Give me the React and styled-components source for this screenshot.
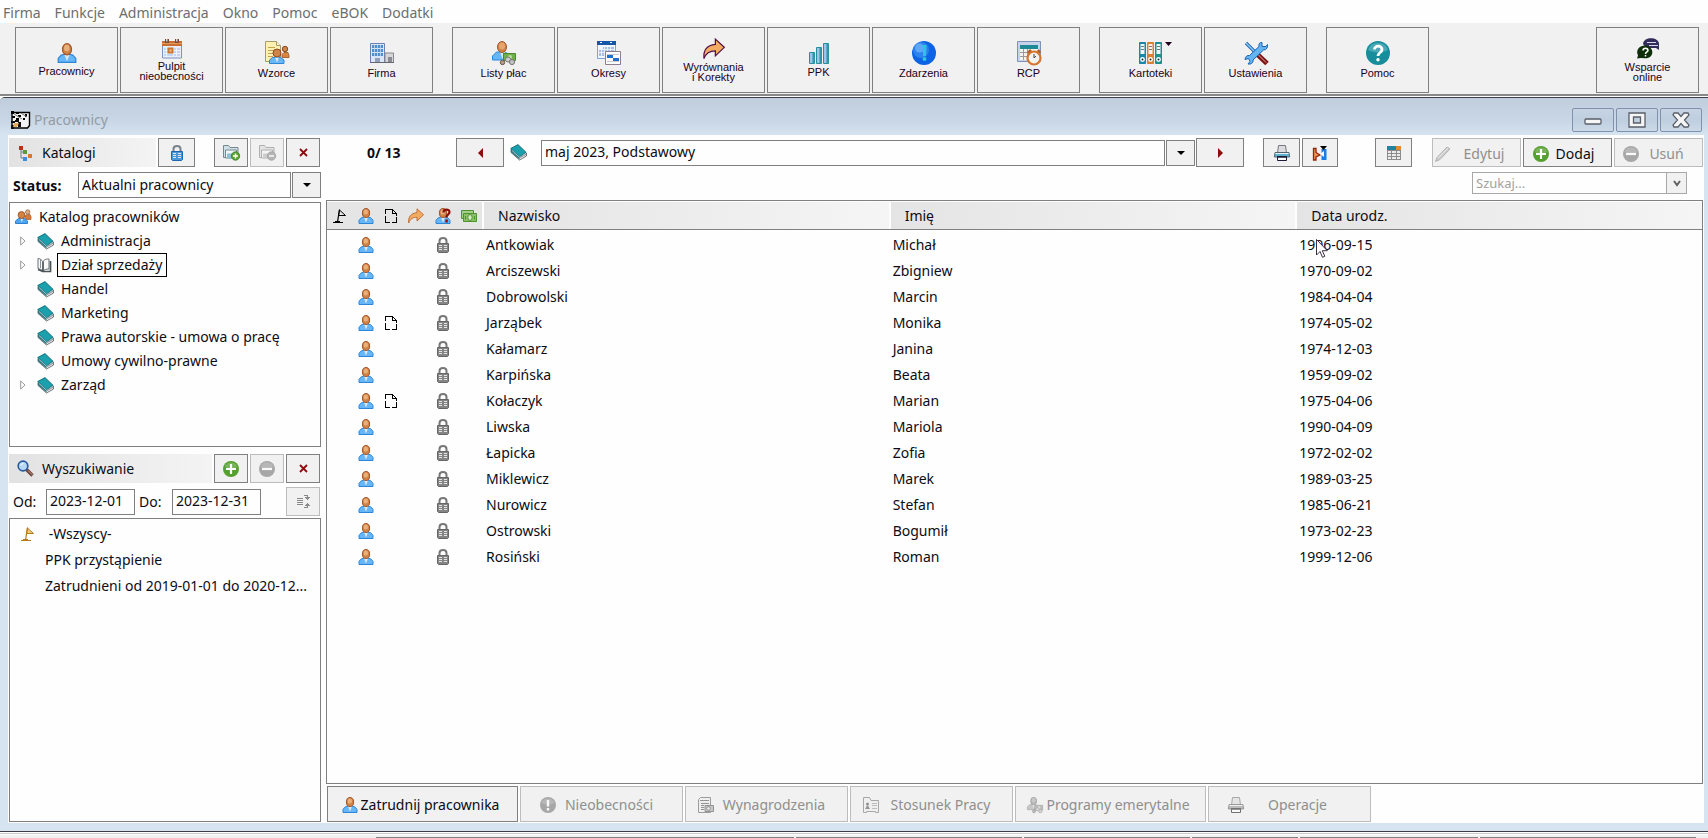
import React from "react";
import styled, { createGlobalStyle, css } from "styled-components";

const colors = {
  text: "#0c0c14",
  line: "#808080",
  lineOff: "#bcbcbc",
  face: "#f1f1f1",
  frame: "#d6e4f1",
  white: "#fefefe",
  muted: "#8f8f8f",
};

const GlobalStyle = createGlobalStyle`
  * {
    box-sizing: border-box;
  }
  body {
    margin: 0;
    background: ${colors.white};
    color: ${colors.text};
    font-family: "Noto Sans", "Open Sans", sans-serif;
    font-size: 14px;
    line-height: 20px;
  }
  button, input, select {
    margin: 0;
    font: inherit;
    color: inherit;
    border-radius: 0;
  }
  svg {
    display: block;
    flex-shrink: 0;
    overflow: visible;
  }
`;

/* ---------- icons ---------- */

const Svg = ({ size = 16, box = 16, crisp, children }) => (
  <svg
    width={size}
    height={size}
    viewBox={`0 0 ${box} ${box}`}
    fill="none"
    shapeRendering={crisp ? "crispEdges" : "auto"}
    aria-hidden="true"
  >
    {children}
  </svg>
);

const personShape = (
  <>
    <path d="M1 15.500v-3.200l2.400-2.600L6 9h4l2.600.7L15 12.300v3.200z" fill="#66b6f8" stroke="#2f86d6" />
    <path d="M6 9.500h4L8 14.500z" fill="#d9e8f4" />
    <ellipse cx="8" cy="5" rx="3.600" ry="4.500" fill="#cf8448" stroke="#a4562a" />
    <ellipse cx="7.800" cy="4" rx="2.200" ry="2.600" fill="#e9b07c" />
  </>
);

const Person = ({ size }) => <Svg size={size}>{personShape}</Svg>;

const People = ({ size }) => (
  <Svg size={size}>
    <path d="M10 9.500V7l2-1.500h3l1 2v3h-5z" fill="#d27b3c" stroke="#a8581f" strokeWidth=".7" />
    <circle cx="12.700" cy="3" r="2.200" fill="#e3ad80" stroke="#8f6a4d" strokeWidth=".8" />
    <path d="M.5 14.500v-2.500l3-2.500h6l3 2.500v2.500z" fill="#4ea5f2" stroke="#2f7fd0" />
    <path d="M5.500 9.500h2.600l-1.300 4z" fill="#dceafa" />
    <circle cx="6.500" cy="6" r="3.400" fill="#d3823f" stroke="#a4562a" strokeWidth=".9" />
  </Svg>
);

const PersonQuestion = () => (
  <Svg>
    {personShape}
    <path d="M8.500 4.500c0-4 6-3.700 6-.5 0 2.500-3 2.500-3 5.500" stroke="#8b0f0a" strokeWidth="2.200" />
    <path d="M10.300 11.500h2.500v3h-2.500z" fill="#8b0f0a" />
  </Svg>
);

const Calendar = () => (
  <Svg size={20} box={20}>
    <path d="M.5 3h19v16H.5z" fill="#e8eefa" stroke="#7f93bf" />
    <path d="M0 2h20v5H0z" fill="#c96f35" />
    <path d="M0 4h20v1H0z" fill="#e09a62" />
    <path d="M3 0h4v4H3zM13 0h4v4h-4z" fill="#7b4a35" />
    <path d="M4 0h1.500v2.500H4zM14 0h1.500v2.500H14z" fill="#d8d0d4" />
    <path d="M2 9h16v8H2z" fill="#c5d4f0" />
    <path d="M4.500 9v8M11.500 9v8M14.500 9v8M2 11.500h16M2 14.500h16" stroke="#eef3fc" />
    <path d="M5.500 8.500h6v6h-6z" fill="#cd7430" />
    <circle cx="8.500" cy="11.500" r="1.500" fill="#e7a86e" />
  </Svg>
);

const Templates = () => (
  <Svg size={24} box={24}>
    <path d="M.5.5h11l4 4v16H.5z" fill="#fdf0b0" stroke="#a99a6a" />
    <path d="M11.500.5v4h4" fill="#fff8d8" stroke="#a99a6a" />
    <path d="M3 6.500h7M3 9.500h9M3 12.500h7M3 15.500h5" stroke="#c3a250" />
    <circle cx="20" cy="8" r="2.700" fill="#cf8448" stroke="#8f4a20" />
    <path d="M17 16.500v-3l2-2h4l1 3v2z" fill="#dc8440" stroke="#9c5020" strokeWidth=".8" />
    <path d="M4.500 22.500V19l3-2.500h8L19 19v3.500z" fill="#66b6f8" stroke="#2f86d6" />
    <path d="M10 16.500h4l-2 5z" fill="#d9e8f4" />
    <circle cx="12" cy="12" r="4" fill="#cf8448" stroke="#8f4a20" />
  </Svg>
);

const Building = () => (
  <Svg size={24} box={24}>
    <path d="M.5 2.500h14v19H.5z" fill="#dbe7f7" stroke="#6d82b0" />
    <path d="M2 5.500h11M2 9.500h11M2 13.500h11" stroke="#4f8fce" strokeWidth="3" />
    <path d="M4.500 4v12M7.500 4v12M10.500 4v12" stroke="#c4daf2" strokeWidth=".8" />
    <path d="M5 17h5v4H5z" fill="#8fa0b8" />
    <path d="M15 12h8.500v9.500H15z" fill="#d6d5d8" stroke="#86868e" />
    <path d="M18 16h4v5h-4z" fill="#8a8a92" />
    <path d="M0 21.500h24" stroke="#66666e" />
  </Svg>
);

const Payroll = ({ size = 24 }) => (
  <Svg size={size} box={24}>
    <path d="M.5 19v-4l4-4h9l4 4v4z" fill="#66b6f8" stroke="#2f86d6" />
    <path d="M8 11h5l-2.500 7z" fill="#d9e8f4" />
    <ellipse cx="10" cy="6" rx="4.500" ry="5.500" fill="#cf8448" stroke="#a4562a" />
    <ellipse cx="10" cy="5" rx="3" ry="3.500" fill="#e5a56c" />
    <path d="M11.500 12.500h12v7h-12z" fill="#6fb04a" stroke="#4a8a2c" />
    <circle cx="18" cy="16" r="2" fill="#b9dfa0" />
    <circle cx="16" cy="18.500" r="2.500" fill="#d0d0d0" stroke="#777" />
    <circle cx="20" cy="21" r="2.600" fill="#c0c0c0" stroke="#777" />
    <circle cx="10.500" cy="21.500" r="2.200" fill="#b49a84" stroke="#6e5a4c" />
  </Svg>
);

const Periods = () => (
  <Svg size={24} box={24}>
    <path d="M.5.500h18v17H.5z" fill="#f2f7fd" stroke="#7fa3d2" />
    <path d="M0 0h19v4H0z" fill="#1457a8" />
    <path d="M3 1.500h2M13 1.500h2" stroke="#fff" />
    <path d="M2 8h4v7H2zM6 6h11v9H6z" fill="#a9bfe0" />
    <path d="M4.500 6v9M7.500 6v9M10.500 6v9M13.500 6v9M2 8.500h15M2 11.500h15" stroke="#f2f7fd" strokeWidth=".8" />
    <path d="M8.500 10.500h15v13h-15z" fill="#fff" stroke="#8d7d8f" />
    <path d="M10 13.500h12M10 20.500h12" stroke="#c9c9d2" />
    <path d="M10 14h6v3h-6zM16 17h6v3h-6z" fill="#1e6fd0" />
  </Svg>
);

const Forward = ({ size = 16, edge = "#b8682c" }) => (
  <Svg size={size}>
    <path d="M.7 15c-.6-6 2-9.800 8.300-10.300V.8L15.500 6.800 9 13V9.300C5 9.300 2.200 10.500.7 15z" fill="#f3ab62" stroke={edge} strokeWidth=".9" />
  </Svg>
);

const Bars = () => (
  <Svg size={22} box={22}>
    <path d="M1.500 10.500h5v11h-5zM8.500 5.500h5v16h-5zM15.500 1.500h5v20h-5z" fill="#9cc4ea" stroke="#2a8d9c" />
    <path d="M5.500 11v10M12.500 6v15M19.500 2v19" stroke="#3295ac" strokeWidth="2" />
  </Svg>
);

const Info = () => (
  <Svg size={24} box={24}>
    <circle cx="12" cy="12" r="12" fill="#0c63e6" />
    <circle cx="9" cy="9" r="8" fill="#4ea4f5" opacity=".5" />
    <circle cx="7.500" cy="7" r="4.500" fill="#7cc2fb" opacity=".6" />
    <path d="M10.500 4h4l-.6 11h-2.800z" fill="#2fc3e0" />
    <circle cx="12.500" cy="18" r="2" fill="#2fc3e0" />
  </Svg>
);

const TimeClock = () => (
  <Svg size={24} box={24}>
    <path d="M.5.5h23v20H.5z" fill="#c5d4ea" stroke="#7e92b8" />
    <path d="M3 4h18v4H3z" fill="#1b8b98" />
    <path d="M3 8h18v11H3z" fill="#f4f3ef" />
    <path d="M6.500 8v11M10.500 8v11M3 11.500h18M3 15.500h18" stroke="#9a9a98" />
    <path d="M11 12l3-3M23 12l-2-3" stroke="#b15a1c" strokeWidth="2.500" />
    <circle cx="17" cy="17" r="6.500" fill="#f2f2f0" stroke="#d6752e" strokeWidth="2.200" />
    <path d="M17 13v4l2-2" stroke="#444" />
  </Svg>
);

const Binders = () => (
  <Svg size={24} box={24}>
    {["#1a87a8", "#d9822b", "#1d9088"].map((c, i) => (
      <g key={c} transform={`translate(${i * 8} 0)`}>
        <path d="M.5 1.500h6v21h-6z" fill={c} stroke={c} />
        <path d="M1.500 3h4v10h-4z" fill="#f4f4f4" />
        <path d="M2 5.500h3M2 8.500h3" stroke="#777" />
        <circle cx="3.500" cy="18.500" r="2.400" fill="#fff" />
        <circle cx="3.500" cy="18.500" r="1" fill="#222" />
      </g>
    ))}
    <path d="M26 1h7l-3.500 4z" fill="#1c001c" />
  </Svg>
);

const Tools = () => (
  <Svg size={24} box={24}>
    <path d="M2 2l10 10" stroke="#1b64b4" strokeWidth="3.200" />
    <path d="M2 2l10 10" stroke="#8ccbf7" strokeWidth="1.400" />
    <path d="M14 14l9 8.500" stroke="#7c1414" strokeWidth="5" />
    <path d="M14 13.500l8 8" stroke="#e7a9a0" strokeWidth="1" />
    <path d="M18 1.500v4h4l1.500-2c.5 3-1 5.500-4 5.500L9 19c.5 3-2 4.500-5 4l2-2.500-1.500-3L1 18.500c0-3 2.500-4.500 4.500-4L15 5.500C14.500 3 15.500 1 18 1.500z" fill="#63b4ef" stroke="#1b64b4" />
  </Svg>
);

const Help = () => (
  <Svg size={24} box={24}>
    <circle cx="12" cy="12" r="12" fill="#178d9c" />
    <path d="M2 9a10.500 10.500 0 0 1 20 0q-10 5-20 0z" fill="#6bbbc8" opacity=".6" />
    <path d="M8.500 8.500c0-4.500 7.500-4.500 7.500 0 0 3-4 3-4 6.500" stroke="#fff" strokeWidth="2.800" />
    <circle cx="12" cy="18.700" r="1.700" fill="#fff" />
  </Svg>
);

const Support = () => (
  <Svg size={22} box={22}>
    <path d="M6 6c1-8 16-7 16 0v6l-3-2H9z" fill="#322c5a" />
    <path d="M10 4.500h9M12 7.500h9" stroke="#d9d9ee" />
    <path d="M0 20.500l1-3C-2 11 4 7 8.500 7.500c9 1 9.500 13-.5 12.800L4 20z" fill="#0f2e0a" />
    <path d="M6 12.500c0-3 5-3 5 0 0 1.500-2.500 1.500-2.500 3.500M8.500 17v1.500" stroke="#fff" strokeWidth="1.500" />
  </Svg>
);

const Chart = () => (
  <Svg size={20} box={20}>
    <path d="M1 2.500h17.500v13l-2 2.500H1z" fill="#f4f4f4" stroke="#000" strokeWidth="1.400" />
    <path d="M0 1h3v3H0zM5 2h3v2H5zM1 6h3v2H1zM7 5h3v2H7zM5 8h3v2H5zM12 8h2v2h-2zM14 4h2v3h-2z" fill="#000" />
    <path d="M3 4l8 5M10 3l6 4" stroke="#777" />
    <path d="M0 11h4v2H0zM0 15h3v4H0zM7 12h3v5H7zM4 10h4v2H4z" fill="#111" />
    <path d="M3 13h5l-2 4H2z" fill="#e3ad5c" />
  </Svg>
);

const TreeIcon = () => (
  <Svg>
    <path d="M4 5v8h4M4 7h5" stroke="#6e7c88" />
    <path d="M2 1h4v4H2z" fill="#b5321f" />
    <path d="M6 5h4v4H6z" fill="#5b9a3c" />
    <path d="M11 9h4v4h-4z" fill="#d67a31" />
    <path d="M6 12h4v4H6z" fill="#3f8fd8" />
  </Svg>
);

const Lock = ({ body = "#4a97dc", edge = "#1f66b2", shackle = "#7a828a" }) => (
  <Svg>
    <path d="M4.500 7V4c0-4 7-4 7 0v3" stroke={shackle} strokeWidth="2" />
    <path d="M2.500 6.500h11v8l-1 1h-9l-1-1z" fill={body} stroke={edge} />
    <path d="M4 8.500h3M9 8.500h3M4 10.500h3M9 10.500h3M4 12.500h3M9 12.500h3" stroke="#e6e6e6" />
  </Svg>
);

const Folder = ({ sign }) => (
  <Svg size={17} box={17}>
    <path d="M.5 13.500v-12h5l1.500 2h8v10z" fill="#cfe0e6" stroke="#75888f" />
    <path d="M2.500 6h11v8h-11z" fill="#f1f6f8" stroke="#75888f" />
    <path d="M4 9.500h8v5H4z" fill="#8ebfd4" />
    <circle cx="12.500" cy="12" r="4.200" fill="#58a436" stroke="#3d7d22" strokeWidth=".8" />
    <path d={sign === "plus" ? "M10 12h5M12.500 9.500v5" : "M10 12h5"} stroke="#fff" strokeWidth="1.500" />
  </Svg>
);

const Cross = () => (
  <Svg size={9} box={9}>
    <path d="M1 1l7 7M8 1L1 8" stroke="#8c0c10" strokeWidth="1.800" />
  </Svg>
);

const Book = () => (
  <Svg size={17} box={17}>
    <path d="M1 5.500v3L9.500 16l7-4V9z" fill="#f3f3f3" stroke="#5c666e" strokeWidth=".9" />
    <path d="M10 13.500l6-3.300" stroke="#8d979e" strokeWidth="1.200" />
    <path d="M.7 4.500L8 .6 16 8.300 9.700 12.600z" fill="#1aa0ad" stroke="#126c78" strokeWidth=".9" />
    <path d="M1 5v3.300l8.700 7.200v-2.700z" fill="#2b7680" />
    <path d="M2 6.500l7.500 6.800" stroke="#c5d4d8" strokeWidth=".8" />
  </Svg>
);

const OpenBook = () => (
  <Svg>
    <path d="M1 1.500C3 1.500 5 3 6 5c1-3 4-3 6-3v10c-3 0-5 .5-6 2.500C5 12.500 3 12 1 11.500z" fill="#fafafa" stroke="#686e72" />
    <path d="M1 12.500l5 2M6 5v9M13.500 4v10.500H5" stroke="#4c5458" strokeWidth="1.700" />
    <path d="M3.500 3v8" stroke="#8e9498" />
  </Svg>
);

const Expander = () => (
  <svg width="6" height="10" viewBox="0 0 6 10" fill="none" aria-hidden="true">
    <path d="M.7 1L5 5 .7 9z" stroke="#9a9a9a" />
  </svg>
);

const Magnifier = () => (
  <Svg size={17} box={17}>
    <path d="M9.500 9.500l6 6" stroke="#6d4238" strokeWidth="3.400" />
    <path d="M11 10.500l4.500 4.500" stroke="#cf9a86" />
    <circle cx="6" cy="6" r="4.800" fill="#b6d9f5" stroke="#2a5aa0" strokeWidth="1.700" />
    <path d="M3.500 5.500q1-2 3-2" stroke="#fff" />
  </Svg>
);

const RoundSign = ({ sign, color = "#55a02e" }) => (
  <Svg>
    <circle cx="8" cy="8" r="8" fill={color} />
    <path d="M1.500 6a7 7 0 0 1 13 0q-6 3-13 0z" fill="#fff" opacity=".2" />
    {sign === "info" ? (
      <path d="M8 3v6.500M8 11v2.500" stroke="#fff" strokeWidth="2.400" />
    ) : (
      <path d={sign === "plus" ? "M3 8h10M8 3v10" : "M3 8h10"} stroke="#fff" strokeWidth="2.200" />
    )}
  </Svg>
);

const Sort = () => (
  <Svg size={13} box={13} crisp>
    <path d="M0 3.500h6M0 5.500h6M0 7.500h6M0 9.500h6M7 .5h3v3M7 12.500h3v-3" stroke="#444" />
    <path d="M8 2h5L10 5zM8 11h5L10 8z" fill="#444" />
  </Svg>
);

const Flag = ({ line = "#000", fill = "none" }) => (
  <Svg size={14} box={14}>
    <path d="M6.500 1l6 5.500h-7z" stroke={line} fill={fill} />
    <path d="M6.500.5l-2 12.500" stroke={line} strokeWidth="1.200" />
    <path d="M0 13.500h10M2 12.500h5" stroke={line} />
  </Svg>
);

const Page = () => (
  <Svg size={14} box={14} crisp>
    <path d="M1.500 5V.5h7M1.500 7v6.500h4M8 13.500h4.500V8M12.500 7V4.500h-4v-4" stroke="#000" />
    <path d="M9 1l3.500 3.500" stroke="#000" />
  </Svg>
);

const Money = () => (
  <Svg>
    <path d="M.5 2.500h12v8H.5z" fill="#a5cf88" stroke="#4f9130" />
    <path d="M2.500 5.500h13v8h-13z" fill="#8cc069" stroke="#4f9130" />
    <ellipse cx="9" cy="9.500" rx="2.200" ry="3" fill="#d4ecc4" stroke="#4f9130" />
    <path d="M4.500 8v3.500M13.500 8v3.500" stroke="#4f9130" />
  </Svg>
);

const Triangle = ({ d, color = "#000" }) => (
  <svg width="8" height="10" viewBox="0 0 8 10" aria-hidden="true">
    <path d={d} fill={color} />
  </svg>
);

const Printer = ({ tone = "#5fb3cf" }) => (
  <Svg>
    <path d="M3.500 8L4.500.5h7L12.500 8z" fill="#dcdce0" stroke="#77777f" />
    <path d="M1 7.500h14l.7 4.500H.3z" fill={tone} stroke="#44505c" strokeWidth=".8" />
    <path d="M1.500 8.500h13" stroke="#e8f0f4" />
    <path d="M3.500 11.500h9v4h-9z" fill="#fff" stroke="#1c1c38" />
    <path d="M3 12h10" stroke="#1c1c38" strokeWidth="1.500" />
  </Svg>
);

const Transfer = () => (
  <Svg>
    <path d="M1.500 3.500h2.500v4l4 2.500-4 2v3H1.500z" fill="#e99652" stroke="#94230c" strokeWidth="1.300" />
    <path d="M9.500 4h5v11h-5z" fill="#1e7be0" />
    <path d="M8 9l4-3v6z" fill="#fff" />
    <path d="M8 1h7l-3.500 4z" fill="#000" />
  </Svg>
);

const Grid = () => (
  <Svg size={14} box={14} crisp>
    <path d="M0 0h9v4H0z" fill="#1c86a0" />
    <path d="M9 0h5v4H9z" fill="#e08a34" />
    <path d="M0 4h14v10H0z" fill="#8c8c8c" />
    <path d="M1 5h3v2H1zM5 5h4v2H5zM10 5h3v2h-3zM1 8h3v2H1zM5 8h4v2H5zM10 8h3v2h-3zM1 11h3v2H1zM5 11h4v2H5zM10 11h3v2h-3z" fill="#ececec" />
  </Svg>
);

const Pencil = () => (
  <Svg>
    <path d="M.5 15.500l1.500-4L12 1l3 2L5 13.500z" fill="#b4b4b4" stroke="#888" />
    <path d="M3 12l10-10" stroke="#e4e4e4" />
  </Svg>
);

const Sheet = () => (
  <Svg>
    <path d="M.5 2.500l2-2h10v15H.5z" fill="#eee" stroke="#666" />
    <path d="M2 3.500h9M3 6.500h8M3 8.500h3M3 10.500h3M3 12.500h3" stroke="#555" />
    <path d="M7 8.500h8.500v6H7z" fill="#aaa" stroke="#555" />
    <circle cx="10.500" cy="11.500" r="1.800" fill="#eee" stroke="#555" />
  </Svg>
);

const CardFile = () => (
  <Svg>
    <path d="M.5 15.500V.5h6l1.500 3h7.500v12h-3v-1h-9v1z" fill="#eee" stroke="#777" />
    <circle cx="4.500" cy="7" r="1.500" fill="#555" />
    <path d="M2 12l2.500-4L7 12z" fill="#555" />
    <path d="M9 6.500h5M9 8.500h5M9 11.500h5" stroke="#999" />
  </Svg>
);

const Cursor = styled.svg`
  position: absolute;
  left: 21px;
  top: 7px;
`;

/* ---------- menu and main toolbar ---------- */

const Screen = styled.div`
  min-height: 100vh;
  display: flex;
  flex-direction: column;
`;

const MenuBar = styled.nav`
  display: flex;
  gap: 14px;
  height: 23px;
  padding-left: 3px;
  line-height: 25px;
  & a {
    color: #6c6e6e;
    text-decoration: none;
  }
`;

const MainToolbar = styled.header`
  display: flex;
  gap: 19px;
  padding: 4px 9px 1px 15px;
  background: ${colors.face};
  border-bottom: 2px solid #868986;
`;

const ToolGroup = styled.div`
  display: flex;
  gap: 2px;
  &:last-child {
    margin-left: auto;
  }
`;

const ToolButton = styled.button`
  width: 103px;
  height: 66px;
  padding: 0;
  display: flex;
  flex-direction: column;
  align-items: center;
  justify-content: center;
  gap: 2px;
  background: ${colors.face};
  border: 1px solid ${colors.line};
  color: #1c0020;
  font-family: "Liberation Sans", Arial, sans-serif;
  font-size: 11px;
  line-height: ${({ $lines }) => ($lines ? "10px" : "12px")};
  white-space: pre-line;
`;

/* ---------- window ---------- */

const Window = styled.main`
  flex: 1;
  margin-top: 1px;
  display: flex;
  flex-direction: column;
  background: ${colors.frame};
  border-top: 1px solid #3c4046;
  border-bottom: 1px solid #403c44;
  border-top-left-radius: 5px;
`;

const TitleBar = styled.div`
  height: 37px;
  padding: 9px 6px 0 11px;
  display: flex;
  align-items: flex-start;
  justify-content: space-between;
  background: linear-gradient(#bfcddc, #c8d6e5 60%, ${colors.frame});
  border-top-left-radius: 4px;
`;

const Title = styled.h1`
  margin: 0;
  padding-top: 3px;
  display: flex;
  align-items: center;
  gap: 3px;
  color: #949ca5;
  font-size: 14px;
  font-weight: 400;
  line-height: 20px;
`;

const WindowButtons = styled.div`
  display: flex;
  gap: 2px;
  padding-top: 1px;
`;

const WindowButton = styled.button`
  width: 42px;
  height: 24px;
  padding: 0;
  display: grid;
  place-items: center;
  border: 1px solid #8091ad;
  border-radius: 2px;
  background: linear-gradient(#c5d3e3, #c0cfe0 50%, #cbd9e8);
`;

const Content = styled.div`
  flex: 1;
  margin: 0 4px 8px 8px;
  padding: 3px 1px 1px;
  display: flex;
  gap: 5px;
  background: ${colors.white};
`;

const Side = styled.aside`
  width: 312px;
  flex-shrink: 0;
  display: flex;
  flex-direction: column;
`;

const PanelHead = styled.div`
  display: flex;
  gap: 2px;
  padding-right: 1px;
`;

const PanelTitle = styled.h2`
  flex: 1;
  margin: 0;
  padding-left: 7px;
  display: flex;
  align-items: center;
  gap: 8px;
  background: linear-gradient(90deg, #e2e2e2, #f4f4f4);
  font-size: 14px;
  font-weight: 400;
  & span {
    width: 18px;
    display: grid;
    place-items: center;
  }
`;

const Button = styled.button`
  width: ${({ $width }) => $width || 34}px;
  height: ${({ $height }) => $height || 29}px;
  flex-shrink: 0;
  margin-left: ${({ $push }) => $push || 0}px;
  padding: ${({ $gap }) => ($gap ? 2 : 0)}px ${({ $trim }) => $trim || 0}px 0 0;
  display: flex;
  align-items: center;
  justify-content: center;
  gap: ${({ $gap }) => $gap || 0}px;
  background: ${colors.face};
  border: 1px solid ${colors.line};
  white-space: nowrap;
  ${({ disabled }) =>
    disabled &&
    css`
      color: ${colors.muted};
      border-color: ${colors.lineOff};
      & svg {
        filter: grayscale(1);
        opacity: 0.6;
      }
    `}
`;

const StatusRow = styled.div`
  display: grid;
  grid-template-columns: 69px 1fr;
  height: 26px;
  margin: 5px 0 4px;
  align-items: center;
  & label {
    padding: 2px 0 0 4px;
    font-weight: 700;
  }
`;

const Combo = styled.div`
  flex: 1;
  min-width: 0;
  display: grid;
  grid-template-columns: 1fr 29px;
  gap: 1px;
  height: 26px;
`;

const Select = styled.select`
  min-width: 0;
  height: 26px;
  padding: 0 3px 1px;
  appearance: none;
  background: ${colors.white};
  border: 1px solid ${colors.line};
`;

const ComboArrow = styled.span`
  display: grid;
  place-items: center;
  background: ${colors.face};
  border: 1px solid ${colors.line};
  pointer-events: none;
`;

const Tree = styled.ul`
  flex: 0 0 245px;
  margin: 0 0 7px;
  padding: 2px 0 0 5px;
  list-style: none;
  border: 1px solid ${colors.line};
`;

const TreeRow = styled.li`
  display: flex;
  align-items: center;
  height: 24px;
  padding-left: ${({ $child }) => ($child ? 5 : 0)}px;
  gap: ${({ $child }) => ($child ? 0 : 8)}px;
`;

const TreeToggle = styled.span`
  width: 17px;
`;

const TreeIconBox = styled.span`
  width: 20px;
`;

const TreeLabel = styled.span`
  padding: 0 4px 0 3px;
  line-height: 22px;
  border: 1px solid ${({ $selected }) => ($selected ? "#000" : "transparent")};
`;

const DateRow = styled.div`
  display: grid;
  grid-template-columns: 37px 89px 37px 89px 1fr;
  align-items: center;
  margin: 4px 0 2px;
  padding-right: 1px;
  & label {
    padding-left: 4px;
  }
  & button {
    justify-self: end;
  }
`;

const DateInput = styled.input`
  width: 100%;
  height: 26px;
  padding: 0 0 2px 3px;
  background: ${colors.white};
  border: 1px solid ${colors.line};
`;

const FilterList = styled.ul`
  flex: 1;
  margin: 0;
  padding: 2px 6px 0 11px;
  list-style: none;
  border: 1px solid ${colors.line};
`;

const FilterItem = styled.li`
  display: grid;
  grid-template-columns: 24px 1fr;
  align-items: center;
  height: 26px;
  & span {
    white-space: pre;
    overflow: hidden;
    text-overflow: ellipsis;
  }
`;

/* ---------- employee list ---------- */

const Main = styled.section`
  flex: 1;
  min-width: 0;
  display: flex;
  flex-direction: column;
`;

const ListToolbar = styled.div`
  display: flex;
  align-items: center;
  height: 29px;
`;

const Counter = styled.strong`
  width: 130px;
  padding-left: 41px;
  white-space: nowrap;
`;

const PeriodIcon = styled.span`
  width: 37px;
  padding-left: 6px;
  flex-shrink: 0;
`;

const Actions = styled.div`
  display: flex;
  gap: 2px;
  margin-left: 20px;
`;

const Search = styled.div`
  display: flex;
  width: 215px;
  height: 22px;
  margin: 5px 16px 6px auto;
  border: 1px solid #a8a8a8;
  & input {
    flex: 1;
    min-width: 0;
    padding: 0 3px;
    border: 0;
    background: ${colors.white};
    font-size: 13px;
  }
  & input::placeholder {
    color: #a0a2a0;
    opacity: 1;
  }
  & button {
    width: 20px;
    padding: 0;
    display: grid;
    place-items: center;
    border: 0;
    border-left: 1px solid #a8a8a8;
    background: ${colors.face};
  }
`;

const TableFrame = styled.div`
  flex: 1;
  border: 1px solid ${colors.line};
`;

const Table = styled.table`
  width: 100%;
  table-layout: fixed;
  border-collapse: separate;
  border-spacing: 0;
  & tbody::before {
    content: "";
    display: block;
    height: 2px;
  }
`;

const HeadIcon = styled.th`
  height: 29px;
  padding: 0;
  background: #e5e5e5;
  border-top: 1px solid ${colors.white};
  border-bottom: 1px solid ${colors.line};
  & svg {
    margin: 0 auto;
  }
`;

const HeadText = styled.th`
  height: 29px;
  padding: 0 0 0 16px;
  background: linear-gradient(90deg, #e4e4e4, #f5f5f5);
  background-clip: padding-box;
  border-top: 1px solid ${colors.white};
  border-bottom: 1px solid ${colors.line};
  box-shadow: inset 2px 0 ${colors.white};
  font-weight: 400;
  text-align: left;
`;

const IconCell = styled.td`
  height: 26px;
  padding: 0;
  & svg {
    margin: 0 auto;
  }
`;

const TextCell = styled.td`
  position: relative;
  padding: 0 0 0 4px;
`;

const BottomBar = styled.div`
  display: flex;
  gap: 2px;
  margin: 2px 0 0 1px;
`;

const StatusStrip = styled.footer`
  display: grid;
  grid-template-columns: 418fr 226fr 166fr 106fr 178fr 216fr;
  gap: 2px;
  height: 6px;
  padding: 3px 12px 0 376px;
  background: linear-gradient(${colors.white} 1px, #c9c9cd 1px 2px, ${colors.white} 2px 3px, ${colors.face} 3px);
  & span {
    margin-top: 2px;
    border-top: 1px solid ${colors.line};
  }
`;

/* ---------- data ---------- */

const menu = ["Firma", "Funkcje", "Administracja", "Okno", "Pomoc", "eBOK", "Dodatki"];

const toolGroups = [
  [
    { label: "Pracownicy", icon: <Person size={20} /> },
    { label: "Pulpit\nnieobecności", icon: <Calendar /> },
    { label: "Wzorce", icon: <Templates /> },
    { label: "Firma", icon: <Building /> },
  ],
  [
    { label: "Listy płac", icon: <Payroll /> },
    { label: "Okresy", icon: <Periods /> },
    { label: "Wyrównania\ni Korekty", icon: <Forward size={22} edge="#52104a" /> },
    { label: "PPK", icon: <Bars /> },
    { label: "Zdarzenia", icon: <Info /> },
    { label: "RCP", icon: <TimeClock /> },
  ],
  [
    { label: "Kartoteki", icon: <Binders /> },
    { label: "Ustawienia", icon: <Tools /> },
  ],
  [{ label: "Pomoc", icon: <Help /> }],
  [{ label: "Wsparcie\nonline", icon: <Support /> }],
];

const catalogs = [
  { name: "Administracja", expandable: true },
  { name: "Dział sprzedaży", expandable: true, selected: true },
  { name: "Handel" },
  { name: "Marketing" },
  { name: "Prawa autorskie - umowa o pracę" },
  { name: "Umowy cywilno-prawne" },
  { name: "Zarząd", expandable: true },
];

const employees = [
  ["Antkowiak", "Michał", "1996-09-15"],
  ["Arciszewski", "Zbigniew", "1970-09-02"],
  ["Dobrowolski", "Marcin", "1984-04-04"],
  ["Jarząbek", "Monika", "1974-05-02", true],
  ["Kałamarz", "Janina", "1974-12-03"],
  ["Karpińska", "Beata", "1959-09-02"],
  ["Kołaczyk", "Marian", "1975-04-06", true],
  ["Liwska", "Mariola", "1990-04-09"],
  ["Łapicka", "Zofia", "1972-02-02"],
  ["Miklewicz", "Marek", "1989-03-25"],
  ["Nurowicz", "Stefan", "1985-06-21"],
  ["Ostrowski", "Bogumił", "1973-02-23"],
  ["Rosiński", "Roman", "1999-12-06"],
];

const operations = [
  { label: "Zatrudnij pracownika", icon: <Person />, width: 191, gap: 3, trim: 4, on: true },
  { label: "Nieobecności", icon: <RoundSign sign="info" color="#777" />, width: 163, gap: 9, trim: 10 },
  { label: "Wynagrodzenia", icon: <Sheet />, width: 163, gap: 9, trim: 10 },
  { label: "Stosunek Pracy", icon: <CardFile />, width: 163, gap: 12, trim: 10 },
  { label: "Programy emerytalne", icon: <Payroll size={16} />, width: 191, gap: 3, trim: 4 },
  { label: "Operacje", icon: <Printer tone="#999" />, width: 163, gap: 24, trim: 24 },
];

const headIcons = [<Flag />, <Person />, <Page />, <Forward />, <PersonQuestion />, <Money />];
const iconWidths = [26, 26, 24, 26, 27, 26];

const ArrowDown = () => <Triangle d="M0 3h8L4 7z" />;

function Sidebar() {
  return (
    <Side>
      <PanelHead>
        <PanelTitle>
          <span><TreeIcon /></span>
          Katalogi
        </PanelTitle>
        <Button $width={37} aria-label="Blokada"><Lock /></Button>
        <Button $push={17} aria-label="Dodaj katalog"><Folder sign="plus" /></Button>
        <Button disabled aria-label="Usuń katalog"><Folder sign="minus" /></Button>
        <Button aria-label="Zamknij katalogi"><Cross /></Button>
      </PanelHead>
      <StatusRow>
        <label htmlFor="status">Status:</label>
        <Combo>
          <Select id="status">
            <option>Aktualni pracownicy</option>
          </Select>
          <ComboArrow><ArrowDown /></ComboArrow>
        </Combo>
      </StatusRow>
      <Tree>
        <TreeRow>
          <People />
          Katalog pracowników
        </TreeRow>
        {catalogs.map(({ name, expandable, selected }) => (
          <TreeRow key={name} $child>
            <TreeToggle>{expandable && <Expander />}</TreeToggle>
            <TreeIconBox>{selected ? <OpenBook /> : <Book />}</TreeIconBox>
            <TreeLabel $selected={selected}>{name}</TreeLabel>
          </TreeRow>
        ))}
      </Tree>
      <PanelHead>
        <PanelTitle>
          <span><Magnifier /></span>
          Wyszukiwanie
        </PanelTitle>
        <Button aria-label="Dodaj filtr"><RoundSign sign="plus" /></Button>
        <Button disabled aria-label="Usuń filtr"><RoundSign sign="minus" color="#777" /></Button>
        <Button aria-label="Zamknij wyszukiwanie"><Cross /></Button>
      </PanelHead>
      <DateRow>
        <label htmlFor="from">Od:</label>
        <DateInput id="from" defaultValue="2023-12-01" />
        <label htmlFor="to">Do:</label>
        <DateInput id="to" defaultValue="2023-12-31" />
        <Button disabled aria-label="Zastosuj okres"><Sort /></Button>
      </DateRow>
      <FilterList>
        <FilterItem>
          <Flag line="#b8791f" fill="#f6c878" />
          <span> -Wszyscy-</span>
        </FilterItem>
        <FilterItem>
          <i />
          <span>PPK przystąpienie</span>
        </FilterItem>
        <FilterItem>
          <i />
          <span>Zatrudnieni od 2019-01-01 do 2020-12...</span>
        </FilterItem>
      </FilterList>
    </Side>
  );
}

function EmployeeTable() {
  return (
    <TableFrame>
      <Table>
        <colgroup>
          {iconWidths.map((width, i) => (
            <col key={i} width={width} />
          ))}
          <col />
          <col />
          <col />
        </colgroup>
        <thead>
          <tr>
            {headIcons.map((icon, i) => (
              <HeadIcon key={i}>{icon}</HeadIcon>
            ))}
            <HeadText>Nazwisko</HeadText>
            <HeadText>Imię</HeadText>
            <HeadText>Data urodz.</HeadText>
          </tr>
        </thead>
        <tbody>
          {employees.map(([surname, name, born, hasNote], i) => (
            <tr key={surname}>
              <IconCell />
              <IconCell><Person /></IconCell>
              <IconCell>{hasNote && <Page />}</IconCell>
              <IconCell />
              <IconCell><Lock body="#858585" edge="#666" shackle="#777" /></IconCell>
              <IconCell />
              <TextCell>{surname}</TextCell>
              <TextCell>{name}</TextCell>
              <TextCell>
                {born}
                {i === 0 && (
                  <Cursor width="12" height="19" viewBox="0 0 12 19" aria-hidden="true">
                    <path d="M.5.5v15.500l3.500-3.500 2.500 5.800 2.300-1-2.500-5.600h5z" fill="#fff" stroke="#3a3040" />
                  </Cursor>
                )}
              </TextCell>
            </tr>
          ))}
        </tbody>
      </Table>
    </TableFrame>
  );
}

function App() {
  return (
    <Screen>
      <GlobalStyle />
      <MenuBar>
        {menu.map((item) => (
          <a key={item} href="#">{item}</a>
        ))}
      </MenuBar>
      <MainToolbar>
        {toolGroups.map((group) => (
          <ToolGroup key={group[0].label}>
            {group.map(({ label, icon }) => (
              <ToolButton key={label} $lines={label.includes("\n")}>
                {icon}
                {label}
              </ToolButton>
            ))}
          </ToolGroup>
        ))}
      </MainToolbar>
      <Window>
        <TitleBar>
          <Title>
            <Chart />
            Pracownicy
          </Title>
          <WindowButtons>
            <WindowButton aria-label="Minimalizuj">
              <svg width="18" height="16" viewBox="0 0 18 16">
                <rect x="1" y="7" width="16" height="5" rx="1" fill="#f6f6f6" stroke="#5a5f68" strokeWidth="1.300" />
              </svg>
            </WindowButton>
            <WindowButton aria-label="Maksymalizuj">
              <svg width="18" height="16" viewBox="0 0 18 16">
                <path d="M1 1h16v14H1zM5.500 5v6h7V5z" fill="#f6f6f6" fillRule="evenodd" stroke="#5a5f68" strokeWidth="1.300" />
              </svg>
            </WindowButton>
            <WindowButton aria-label="Zamknij">
              <svg width="18" height="16" viewBox="0 0 18 16">
                <path d="M2 1h4l3 3.500L12 1h4l1 2-4.500 5L17 13l-1 2h-4l-3-3.500L6 15H2l-1-2 4.500-5L1 3z" fill="#f6f6f6" stroke="#5a5f68" strokeWidth="1.300" />
              </svg>
            </WindowButton>
          </WindowButtons>
        </TitleBar>
        <Content>
          <Sidebar />
          <Main>
            <ListToolbar>
              <Counter>0/ 13</Counter>
              <Button $width={48} aria-label="Poprzedni okres">
                <Triangle d="M7 0v10L2 5z" color="#8c0c0c" />
              </Button>
              <PeriodIcon><Book /></PeriodIcon>
              <Combo>
                <Select aria-label="Okres">
                  <option>maj 2023, Podstawowy</option>
                </Select>
                <ComboArrow><ArrowDown /></ComboArrow>
              </Combo>
              <Button $width={48} $push={1} aria-label="Następny okres">
                <Triangle d="M2 0v10l5-5z" color="#8c0c0c" />
              </Button>
              <Button $width={37} $push={19} aria-label="Drukuj"><Printer /></Button>
              <Button $width={36} $push={2} aria-label="Przenieś"><Transfer /></Button>
              <Button $width={37} $push={37} aria-label="Kolumny"><Grid /></Button>
              <Actions>
                <Button disabled $width={89} $gap={13} $trim={14}><Pencil />Edytuj</Button>
                <Button $width={89} $gap={7} $trim={8}><RoundSign sign="plus" />Dodaj</Button>
                <Button disabled $width={89} $gap={10} $trim={10}><RoundSign sign="minus" color="#777" />Usuń</Button>
              </Actions>
            </ListToolbar>
            <Search>
              <input type="text" placeholder="Szukaj..." aria-label="Szukaj" />
              <button aria-label="Historia wyszukiwania">
                <svg width="8" height="7" viewBox="0 0 8 7" fill="none">
                  <path d="M1 1l3 4 3-4" stroke="#606060" strokeWidth="2" />
                </svg>
              </button>
            </Search>
            <EmployeeTable />
            <BottomBar>
              {operations.map(({ label, icon, width, gap, trim, on }) => (
                <Button key={label} disabled={!on} $width={width} $height={36} $gap={gap} $trim={trim}>
                  {icon}
                  {label}
                </Button>
              ))}
            </BottomBar>
          </Main>
        </Content>
      </Window>
      <StatusStrip>
        {[0, 1, 2, 3, 4, 5].map((i) => (
          <span key={i} />
        ))}
      </StatusStrip>
    </Screen>
  );
}

export default App;
